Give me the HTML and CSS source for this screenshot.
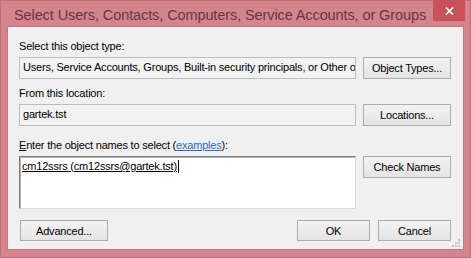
FILE: index.html
```html
<!DOCTYPE html>
<html lang="en">
<head>
    <meta charset="UTF-8">
    <title>Select Users, Contacts, Computers, Service Accounts, or Groups</title>
    <link rel="stylesheet" href="styles.css">
</head>
<body>
    <div class="window">
        <div class="titlebar">
            <span class="title">Select Users, Contacts, Computers, Service Accounts, or Groups</span>
            <span class="close">
                <svg width="9" height="8" viewBox="0 0 9 8"><path d="M1 0.5 L8 7.5 M8 0.5 L1 7.5" stroke="#fff" stroke-width="1.7" fill="none"/></svg>
            </span>
        </div>

        <div class="client">
            <div class="grid">
                <div class="label first">Select this object type:</div>
                <div class="field">Users, Service Accounts, Groups, Built-in security principals, or Other objects</div>
                <button class="btn side">Object Types...</button>

                <div class="label">From this location:</div>
                <div class="field">gartek.tst</div>
                <button class="btn side">Locations...</button>

                <div class="label third"><u>E</u>nter the object names to select (<a href="#">examples</a>):</div>
                <div class="names"><span class="entry">cm12ssrs (cm12ssrs@gartek.tst)</span><span class="caret"></span></div>
                <button class="btn side top">Check Names</button>
            </div>

            <div class="footer">
                <button class="btn">Advanced...</button>
                <div class="actions">
                    <button class="btn small">OK</button>
                    <button class="btn small">Cancel</button>
                </div>
            </div>

            <svg class="grip" width="8" height="8" viewBox="0 0 8 8">
                <rect x="6" y="0" width="2" height="2" fill="#c4c4c4"/>
                <rect x="3" y="3" width="2" height="2" fill="#c4c4c4"/>
                <rect x="6" y="3" width="2" height="2" fill="#c4c4c4"/>
                <rect x="0" y="6" width="2" height="2" fill="#c4c4c4"/>
                <rect x="3" y="6" width="2" height="2" fill="#c4c4c4"/>
                <rect x="6" y="6" width="2" height="2" fill="#c4c4c4"/>
            </svg>
        </div>
    </div>
</body>
</html>
```

FILE: styles.css
```css
* {
    margin: 0;
    padding: 0;
    box-sizing: border-box;
}
body {
    background: #d3848d;
    font-family: "Liberation Sans", Arial, sans-serif;
    font-size: 11px;
    letter-spacing: -0.2px;
    color: #000;
}
.window {
    width: 471px;
    height: 258px;
    display: flex;
    flex-direction: column;
    background: #d3848d;
    border: 1px solid #bf6c76;
}
.titlebar {
    height: 29px;
    display: flex;
    align-items: flex-start;
    padding-left: 13px;
}
.title {
    margin-top: 6px;
    font-size: 14.5px;
    line-height: 17px;
    letter-spacing: -0.1px;
    color: #6a3440;
}
.close {
    margin-left: auto;
    margin-right: 5px;
    margin-top: -1px;
    width: 32px;
    height: 21px;
    background: #c9515b;
    display: flex;
    align-items: center;
    justify-content: center;
}
.client {
    position: relative;
    flex: 1;
    margin: 0 7px 8px 7px;
    padding: 12px 12px 8px 11px;
    background: #f0f0f0;
    box-shadow: 0 0 0 1px #c6737d;
    display: flex;
    flex-direction: column;
}
.grid {
    display: grid;
    grid-template-columns: 337px 88px;
    column-gap: 7px;
}
.label {
    grid-column: 1 / 3;
    line-height: 14px;
    margin-top: 7px;
}
.label.first {
    margin-top: 0;
}
.label.third {
    margin-top: 12px;
}
.label a {
    color: #2f6bb2;
}
.field {
    margin-top: 4px;
    height: 22px;
    padding: 0 2px 2px 3px;
    line-height: 18px;
    white-space: nowrap;
    overflow: hidden;
    background: #f2f2f2;
    border: 1px solid #bdbdbd;
}
.btn {
    height: 22px;
    font-family: inherit;
    font-size: 11px;
    letter-spacing: -0.2px;
    color: #000;
    background: linear-gradient(#f2f2f2, #e4e4e4);
    border: 1px solid #acacac;
}
.btn.side {
    margin-top: 4px;
}
.names {
    margin-top: 4px;
    height: 53px;
    padding: 3px 2px;
    line-height: 13px;
    background: #fff;
    border: 1px solid;
    border-color: #7d7d7d #dcdcdc #dcdcdc #7d7d7d;
    box-shadow: inset 1px 1px 0 #b4b4b4;
}
.entry {
    text-decoration: underline;
}
.caret {
    display: inline-block;
    width: 1px;
    height: 13px;
    margin-left: 1px;
    vertical-align: top;
    background: #000;
}
.footer {
    margin-top: 11px;
    display: flex;
    justify-content: space-between;
    padding-left: 1px;
}
.footer .btn {
    width: 88px;
    height: 21px;
}
.actions {
    display: flex;
    gap: 8px;
}
.footer .btn.small {
    width: 73px;
}
.grip {
    position: absolute;
    right: 3px;
    bottom: 2px;
}
```
